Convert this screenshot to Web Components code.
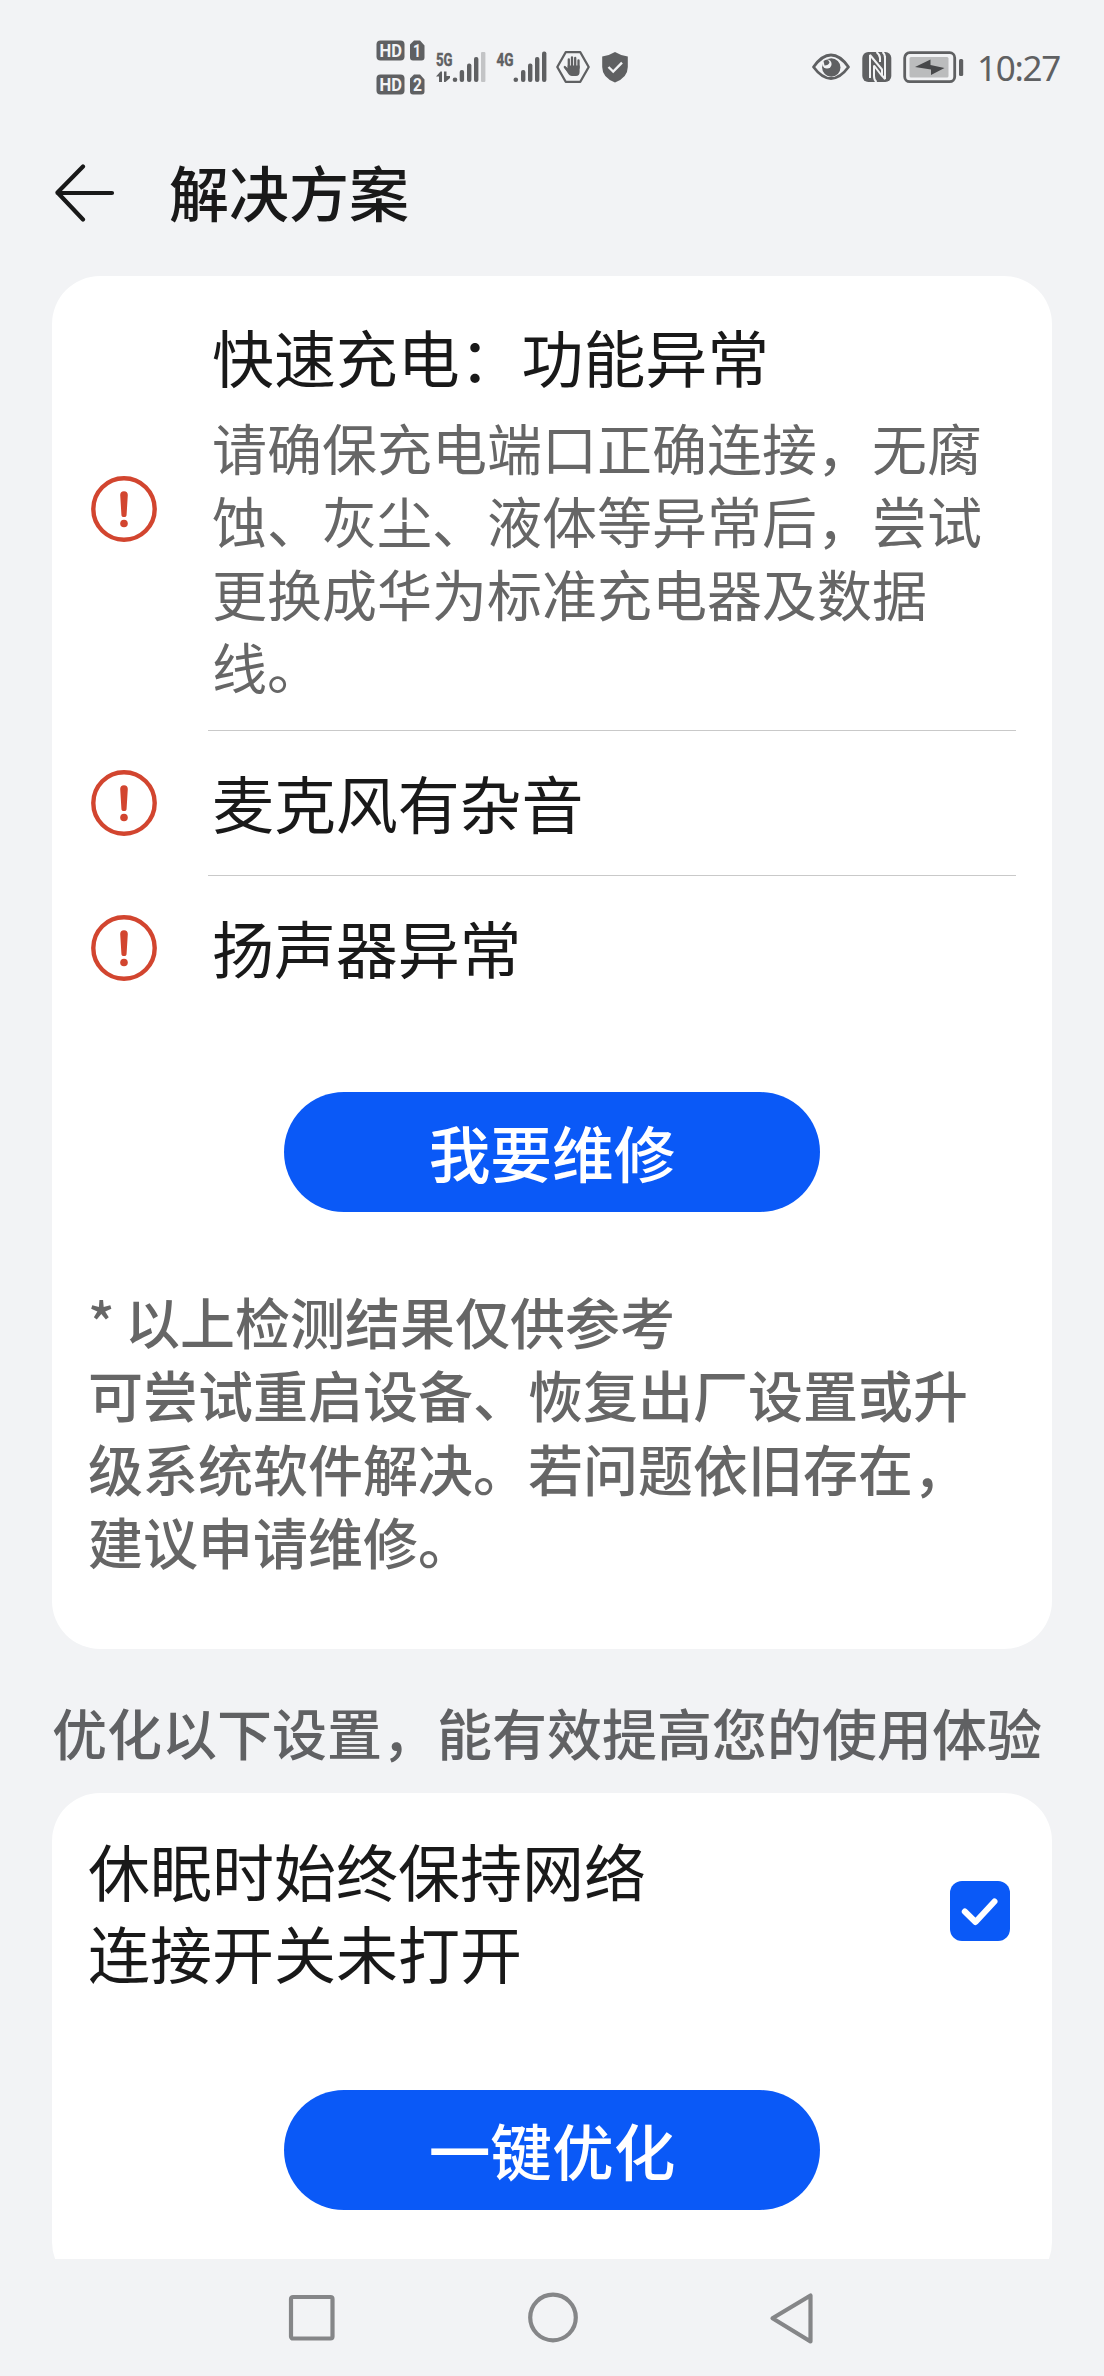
<!DOCTYPE html>
<html lang="zh-CN">
<head>
<meta charset="utf-8">
<title>解决方案</title>
<style>
  html, body { margin: 0; padding: 0; }
  body {
    width: 1104px; height: 2376px; overflow: hidden;
    background: #f2f3f5; color: #191919;
    font-family: "Noto Sans CJK SC", sans-serif;
  }
</style>
</head>
<body>
<phone-screen>
  <status-bar slot="status" time="10:27"></status-bar>
  <page-header slot="header">解决方案</page-header>

  <rounded-card>
    <issue-list>
      <issue-row heading="快速充电：功能异常">请确保充电端口正确连接，无腐蚀、灰尘、液体等异常后，尝试更换成华为标准充电器及数据线。</issue-row>
      <issue-row heading="麦克风有杂音"></issue-row>
      <issue-row heading="扬声器异常"></issue-row>
    </issue-list>
    <pill-button style="margin-top:71px">我要维修</pill-button>
    <foot-note>* 以上检测结果仅供参考<br>可尝试重启设备、恢复出厂设置或升级系统软件解决。若问题依旧存在，建议申请维修。</foot-note>
  </rounded-card>

  <section-caption>优化以下设置，能有效提高您的使用体验</section-caption>

  <rounded-card>
    <check-row>休眠时始终保持网络连接开关未打开</check-row>
    <pill-button style="margin-top:97px;margin-bottom:80px">一键优化</pill-button>
  </rounded-card>

  <nav-bar slot="nav"></nav-bar>
</phone-screen>

<script>
  const define = (name, html, init) => {
    const tpl = document.createElement('template');
    tpl.innerHTML = html;
    customElements.define(name, class extends HTMLElement {
      constructor() {
        super();
        this.attachShadow({ mode: 'open' }).append(tpl.content.cloneNode(true));
      }
      connectedCallback() { if (init) init(this, this.shadowRoot); }
    });
  };

  define('phone-screen', `
    <style>
      :host { display: flex; flex-direction: column; width: 1104px; height: 2376px; }
      main { flex: 1; min-height: 0; overflow: hidden; padding: 0 52px; }
    </style>
    <slot name="status"></slot>
    <slot name="header"></slot>
    <main><slot></slot></main>
    <slot name="nav"></slot>`);

  define('status-bar', `
    <style>
      :host { display: flex; justify-content: space-between; align-items: center;
        box-sizing: border-box; height: 134px; padding: 0 44px 0 376px; color: #5f6062;
        font-family: Roboto, "Noto Sans", sans-serif; }
      .group { display: flex; align-items: center; }
      svg { display: block; fill: #5f6062; overflow: visible; }
      svg text { font-family: Roboto, sans-serif; font-weight: 700; }
      .net { stroke: #5f6062; stroke-width: 0.500; }
      time { font: 400 35px/40px "Noto Sans", Roboto, sans-serif; letter-spacing: -1.300px; margin-left: 13px; padding-top: 2px; }
    </style>
    <div class="group">
      <svg width="49" height="56" viewBox="0 0 49 56">
        <rect x="0.5" y="1.5" width="28" height="20" rx="4"/>
        <path d="M38 1.5h6l4.500 5v12a3 3 0 0 1-3 3h-8.500a3 3 0 0 1-3-3v-13z"/>
        <rect x="0.500" y="35.500" width="28" height="20" rx="4"/>
        <path d="M38 35.500h6l4.500 5v12a3 3 0 0 1-3 3h-8.500a3 3 0 0 1-3-3v-13z"/>
        <g fill="#f2f3f5" font-size="18">
          <text x="3.500" y="18" textLength="22.500" lengthAdjust="spacingAndGlyphs">HD</text>
          <text x="37" y="18" textLength="8" lengthAdjust="spacingAndGlyphs">1</text>
          <text x="3.500" y="52" textLength="22.500" lengthAdjust="spacingAndGlyphs">HD</text>
          <text x="37" y="52" textLength="9" lengthAdjust="spacingAndGlyphs">2</text>
        </g>
      </svg>
      <svg width="50" height="42" viewBox="0 -4 50 42" style="margin-left:11px">
        <text class="net" x="0" y="16" font-size="19" textLength="16.500" lengthAdjust="spacingAndGlyphs">5G</text>
        <path d="M0 26.500l4.500-5h1.500v10.500h-3v-5.500zM8 21.500h2.500v4.500h3.500v2l-4.500 4h-1.500z"/>
        <circle cx="19" cy="29.800" r="2.300"/>
        <rect x="23.700" y="20" width="4.400" height="12" rx="2"/>
        <rect x="31" y="13.500" width="4.400" height="18.500" rx="2"/>
        <rect x="38" y="7" width="4.400" height="25" rx="2"/>
        <rect x="45" y="2" width="4.400" height="30" rx="1" fill="#c3c4c6"/>
      </svg>
      <svg width="52" height="42" viewBox="0 -4 52 42" style="margin-left:10px">
        <text class="net" x="0.500" y="16" font-size="19" textLength="17" lengthAdjust="spacingAndGlyphs">4G</text>
        <circle cx="19.800" cy="29.800" r="2.300"/>
        <rect x="25" y="20" width="4.400" height="12" rx="2"/>
        <rect x="32" y="13.500" width="4.400" height="18.500" rx="2"/>
        <rect x="39" y="7" width="4.400" height="25" rx="2"/>
        <rect x="46" y="1.500" width="4.400" height="30.500" rx="2"/>
      </svg>
      <svg width="34" height="34" viewBox="0 0 34 34" style="margin-left:8px">
        <path d="M9.700 2.200h14.600L32.700 17l-8.400 14.800H9.700L1.300 17z" fill="none" stroke="#5f6062" stroke-width="2.300" stroke-linejoin="round"/>
        <g fill="none" stroke="#5f6062" stroke-width="2.300" stroke-linecap="round">
          <path d="M12.800 9.500V18M16 7.300V18M19.200 8V18M22.500 10.500V18M8.800 17l4.500 5"/>
        </g>
        <path d="M11.600 15.500h12v6.500q0 4-3.600 4h-4.200q-2 0-3.200-1.800L8 17.500l2-.6 1.600 1.600z"/>
      </svg>
      <svg width="26" height="32" viewBox="0 0 26 32" style="margin-left:12px">
        <path d="M13 1q6 3.800 12.800 4.400V16q0 10.500-12.800 15.500Q.2 26.500.2 16V5.400Q7 4.800 13 1z"/>
        <path d="M6.500 16l4.700 4.500 8.800-8.800" fill="none" stroke="#f2f3f5" stroke-width="2.400"/>
      </svg>
    </div>
    <div class="group">
      <svg width="38" height="28" viewBox="0 0 38 28">
        <path d="M1.500 14Q10 2 19 2t17.500 12Q28 25.500 19 25.500T1.500 14z" fill="none" stroke="#5f6062" stroke-width="2.800" stroke-linejoin="round"/>
        <circle cx="19.300" cy="14.500" r="9.200"/>
        <circle cx="15" cy="11" r="4.600" fill="#f2f3f5"/>
        <path d="M11.500 8q5-3 6 1.500-1 3-5 3z"/>
      </svg>
      <svg width="30" height="32" viewBox="0 0 30 32" style="margin-left:12px">
        <rect x="0.300" y="1" width="29" height="30" rx="6"/>
        <g fill="none" stroke="#f2f3f5" stroke-width="2" stroke-linejoin="bevel">
          <path d="M8 27V4L20 18.500V25L12 14.500V25q0 4 2.500 6"/>
          <path d="M14.500 1q3.500 3 3.500 6v4M23 5v23L20 24.500M20.500 1Q23 3 23 7"/>
        </g>
      </svg>
      <svg width="61" height="34" viewBox="0 0 61 34" style="margin-left:11px">
        <rect x="1.700" y="2.700" width="50" height="29" rx="5" fill="none" stroke="#5f6062" stroke-width="2.800"/>
        <rect x="6.500" y="7" width="39" height="20.500" rx="1.500" fill="#bbbcbd"/>
        <path d="M12 17L27.500 9.500V15L41.500 18 28 25v-5.500z" fill="#47484a"/>
        <rect x="56" y="9" width="4.200" height="17" rx="1.500"/>
      </svg>
      <time></time>
    </div>`,
    (el, root) => { root.querySelector('time').textContent = el.getAttribute('time'); });

  define('page-header', `
    <style>
      :host { display: flex; align-items: center; box-sizing: border-box; height: 142px;
        padding: 0 54px 27px; }
      svg { display: block; margin-right: 53px; }
      h1 { margin: 0; font-size: 60px; line-height: 80px; font-weight: 500; padding-bottom: 2px; }
    </style>
    <svg width="62" height="60" viewBox="0 0 62 60" fill="none" stroke="#191919" stroke-width="4.200" stroke-linecap="round" stroke-linejoin="round">
      <path d="M58 31H3.500M29 4.500L3.500 30.500 29 57.500"/>
    </svg>
    <h1><slot></slot></h1>`);

  define('rounded-card', `
    <style>
      :host { display: flex; flex-direction: column; align-items: stretch;
        background: #fff; border-radius: 48px; padding: 12px 36px 0; }
    </style>
    <slot></slot>`);

  define('issue-list', `
    <style>
      :host { display: flex; flex-direction: column; }
    </style>
    <slot></slot>`);

  define('issue-row', `
    <style>
      :host { display: flex; align-items: center; --line: #c9c9c9; }
      :host(:last-of-type) { --line: transparent; }
      svg { display: block; flex: none; margin: 0 51px 1px 3px; }
      .body { flex: 1; box-sizing: border-box; min-height: 145px; border-bottom: 1px solid var(--line);
        display: flex; flex-direction: column; justify-content: center; gap: 13px; padding: 27px 0 28px 4px; }
      .body.single { padding-bottom: 30px; }
      h2 { margin: 0; font-size: 62px; line-height: 82px; font-weight: 400; letter-spacing: -0.100px; }
      p { margin: 0 -12px 0 0; font-size: 55px; line-height: 73.100px; color: #666; }
      p[hidden] { display: none; }
    </style>
    <svg width="66" height="66" viewBox="0 0 66 66" fill="#d2452f">
      <circle cx="33" cy="33" r="30.700" fill="none" stroke="#d2452f" stroke-width="4.400"/>
      <path d="M29.200 19a3.800 3.800 0 0 1 7.600 0L35.600 38.500a2.600 2.600 0 0 1-5.200 0z"/>
      <circle cx="33" cy="47.500" r="3.800"/>
    </svg>
    <div class="body"><h2></h2><p><slot></slot></p></div>`,
    (el, root) => {
      const empty = !el.textContent.trim();
      root.querySelector('h2').textContent = el.getAttribute('heading');
      root.querySelector('p').hidden = empty;
      root.querySelector('.body').classList.toggle('single', empty);
    });

  define('pill-button', `
    <style>
      :host { display: block; align-self: center; }
      button { display: flex; align-items: center; justify-content: center; width: 536px; height: 120px;
        margin: 0; padding: 0 0 3px; border: 0; border-radius: 60px; background: #0a59f7; color: #fff;
        font: 500 61.700px/82px "Noto Sans CJK SC", sans-serif; }
    </style>
    <button><slot></slot></button>`);

  define('foot-note', `
    <style>
      :host { display: block; margin: 72px 0 72.600px; font-size: 55px; line-height: 73.100px;
        font-weight: 500; color: #666; word-spacing: -2px; }
    </style>
    <slot></slot>`);

  define('section-caption', `
    <style>
      :host { display: block; padding: 45px 0 25px; font-size: 55px; line-height: 74px;
        font-weight: 500; color: #606163; white-space: nowrap; }
    </style>
    <slot></slot>`);

  define('check-row', `
    <style>
      :host { display: flex; align-items: center; justify-content: space-between; padding: 24px 6px 0 0; }
      .label { width: 600px; font-size: 62px; line-height: 82px; }
      svg { display: block; }
    </style>
    <div class="label"><slot></slot></div>
    <svg width="60" height="60" viewBox="0 0 60 60">
      <rect width="60" height="60" rx="12" fill="#0a59f7"/>
      <path d="M14.800 30.500L25.500 41 44.500 20.500" fill="none" stroke="#fff" stroke-width="6" stroke-linecap="round" stroke-linejoin="round"/>
    </svg>`);

  define('nav-bar', `
    <style>
      :host { display: flex; align-items: center; justify-content: space-between; box-sizing: border-box;
        height: 117px; padding: 0 289px 0 287px; background: #f2f3f5; flex: none; }
      svg { display: block; fill: none; stroke: #858688; stroke-width: 4.200; stroke-linejoin: round; }
    </style>
    <svg width="50" height="52" viewBox="0 0 50 52"><rect x="4" y="5" width="41.500" height="41.500" rx="2"/></svg>
    <svg width="52" height="52" viewBox="0 0 52 52"><circle cx="26" cy="25.500" r="22.800"/></svg>
    <svg width="46" height="52" viewBox="0 0 46 52"><path d="M3.500 26.300L41.500 3.500v46z"/></svg>`);
</script>
</body>
</html>
